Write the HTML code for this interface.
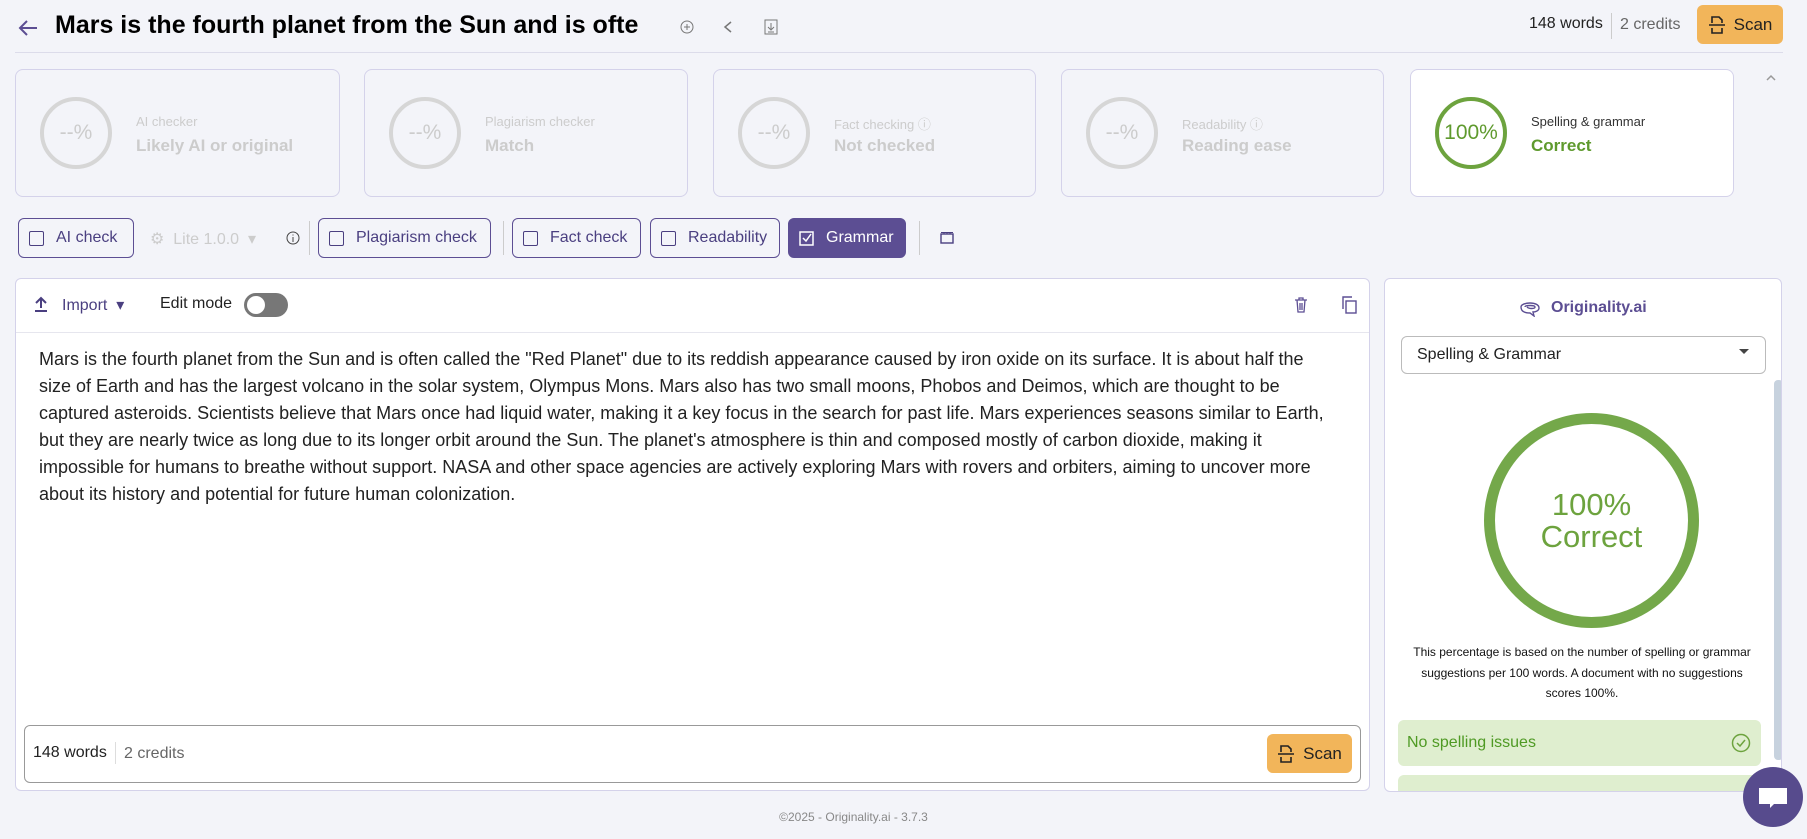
<!DOCTYPE html>
<html><head><meta charset="utf-8"><style>
*{box-sizing:border-box;margin:0;padding:0}
body{width:1807px;height:839px;background:#f3f4f9;font-family:"Liberation Sans",Arial,sans-serif;position:relative;overflow:hidden;color:#222}
.abs{position:absolute}
.card{position:absolute;top:69px;height:128px;border:1px solid #d4d2ea;border-radius:8px;background:#f3f4f9}
.card .ring{position:absolute;left:24px;top:27px;width:72px;height:72px;border:4px solid #d6d6d6;border-radius:50%;display:flex;align-items:center;justify-content:center;color:#ccc;font-size:21px}
.card .t1{position:absolute;left:120px;top:44px;font-size:13px;color:#ccc}
.card .t2{position:absolute;left:120px;top:66px;font-size:17px;font-weight:bold;color:#ccc}
.btn{position:absolute;top:218px;height:40px;border:1px solid #5c4e93;border-radius:6px;display:flex;align-items:center;padding-left:10px;font-size:16px;color:#4a3f80}
.cb{width:15px;height:15px;border:1.5px solid #4a3f80;border-radius:2px;margin-right:12px}
.vd{position:absolute;width:1px;background:#ccc}
</style></head><body>
<svg class="abs" style="left:17px;top:18px" width="22" height="20" viewBox="0 0 22 20"><path d="M20 10H3M10 3L3 10l7 7" stroke="#5c4e93" stroke-width="2" fill="none"/></svg>
<div class="abs" style="left:55px;top:11px;font-size:25px;font-weight:bold;color:#000">Mars is the fourth planet from the Sun and is ofte</div>
<svg class="abs" style="left:680px;top:20px" width="14" height="14"><circle cx="7" cy="7" r="6" stroke="#777" fill="none"/><path d="M7 4v6M4 7h6" stroke="#777"/></svg>
<svg class="abs" style="left:721px;top:20px" width="14" height="14"><path d="M10 2L4 7l6 5" stroke="#777" stroke-width="1.5" fill="none"/></svg>
<svg class="abs" style="left:764px;top:19px" width="14" height="16"><rect x="1" y="1" width="12" height="14" stroke="#777" fill="none"/><path d="M7 4v6M4 8l3 3 3-3M4 13h6" stroke="#777" fill="none"/></svg>
<div class="abs" style="left:1529px;top:15px;font-size:16px;color:#222">148 words</div>
<div class="vd" style="left:1611px;top:13px;height:26px"></div>
<div class="abs" style="left:1620px;top:16px;font-size:16px;color:#666">2 credits</div>
<div class="abs" style="left:1697px;top:5px;width:86px;height:39px;background:#f2b55a;border-radius:6px;display:flex;align-items:center;justify-content:center;font-size:17px;color:#222">
<svg width="18" height="20" style="margin-right:8px"><path d="M4 8V2h7l3 3v3M1 10h16M4 13v5h10v-5" stroke="#222" stroke-width="1.6" fill="none"/></svg>Scan</div>
<div class="abs" style="left:15px;top:52px;width:1768px;height:1px;background:#dcdcea"></div>
<div class="card" style="left:15px;width:325px"><div class="ring">--%</div><div class="t1">AI checker</div><div class="t2">Likely AI or original</div></div>
<div class="card" style="left:364px;width:324px"><div class="ring">--%</div><div class="t1">Plagiarism checker</div><div class="t2">Match</div></div>
<div class="card" style="left:713px;width:323px"><div class="ring">--%</div><div class="t1">Fact checking ⓘ</div><div class="t2">Not checked</div></div>
<div class="card" style="left:1061px;width:323px"><div class="ring">--%</div><div class="t1">Readability ⓘ</div><div class="t2">Reading ease</div></div>
<div class="card" style="left:1410px;width:324px;background:#fff"><div class="ring" style="border-color:#6da33e;color:#5f9a2e;font-size:21px">100%</div><div class="t1" style="color:#333">Spelling &amp; grammar</div><div class="t2" style="color:#5f9a2e">Correct</div></div>
<svg class="abs" style="left:1765px;top:73px" width="12" height="10"><path d="M2 7l4-4 4 4" stroke="#999" stroke-width="1.5" fill="none"/></svg>
<div class="btn" style="left:18px;width:116px"><div class="cb"></div>AI check</div>
<div class="abs" style="left:150px;top:229px;font-size:16px;color:#ccc">⚙&nbsp;&nbsp;Lite 1.0.0 &nbsp;▾</div>
<svg class="abs" style="left:286px;top:231px" width="14" height="14"><circle cx="7" cy="7" r="6" stroke="#444" fill="none"/><path d="M7 6v5M7 3.5v1" stroke="#444"/></svg>
<div class="vd" style="left:309px;top:221px;height:34px"></div>
<div class="btn" style="left:318px;width:173px"><div class="cb"></div>Plagiarism check</div>
<div class="vd" style="left:503px;top:221px;height:34px"></div>
<div class="btn" style="left:512px;width:129px"><div class="cb"></div>Fact check</div>
<div class="btn" style="left:650px;width:130px"><div class="cb"></div>Readability</div>
<div class="btn" style="left:788px;width:118px;background:#5c4e93;color:#fff"><svg width="15" height="15" style="margin-right:12px"><rect x="1" y="1" width="13" height="13" stroke="#fff" fill="none" stroke-width="1.5"/><path d="M4 7l3 3 5-7" stroke="#fff" stroke-width="1.5" fill="none"/></svg>Grammar</div>
<div class="vd" style="left:919px;top:221px;height:34px"></div>
<svg class="abs" style="left:940px;top:231px" width="14" height="13"><rect x="1" y="3" width="12" height="9" stroke="#4a3f80" fill="none" stroke-width="1.4"/><path d="M1 1.5h12M4 1v2M7 1v2M10 1v2" stroke="#4a3f80"/></svg>
<div class="abs" style="left:15px;top:278px;width:1355px;height:513px;background:#fff;border:1px solid #d4d2ea;border-radius:6px"></div>
<svg class="abs" style="left:34px;top:296px" width="14" height="16"><path d="M7 12V2M2 7l5-5 5 5M1 15h12" stroke="#4a3f80" stroke-width="2" fill="none"/></svg>
<div class="abs" style="left:62px;top:295px;font-size:16px;color:#4a3f80">Import &nbsp;▾</div>
<div class="abs" style="left:160px;top:295px;font-size:16px;color:#222">Edit mode</div>
<div class="abs" style="left:244px;top:293px;width:44px;height:24px;border-radius:12px;background:#777"><div style="position:absolute;left:3px;top:3px;width:18px;height:18px;border-radius:50%;background:#fff"></div></div>
<svg class="abs" style="left:1294px;top:297px" width="14" height="16"><path d="M1 3h12M5 3V1h4v2M3 3l1 12h6l1-12M6 6v7M8 6v7" stroke="#5c4e93" stroke-width="1.3" fill="none"/></svg>
<svg class="abs" style="left:1341px;top:296px" width="16" height="18"><rect x="5" y="5" width="10" height="12" stroke="#5c4e93" fill="none" stroke-width="1.4"/><path d="M2 13V1h9" stroke="#5c4e93" fill="none" stroke-width="1.4"/></svg>
<div class="abs" style="left:16px;top:332px;width:1353px;height:1px;background:#e6e6ee"></div>
<div class="abs" style="left:39px;top:346px;width:1300px;font-size:18px;line-height:27px;color:#222">Mars is the fourth planet from the Sun and is often called the "Red Planet" due to its reddish appearance caused by iron oxide on its surface. It is about half the size of Earth and has the largest volcano in the solar system, Olympus Mons. Mars also has two small moons, Phobos and Deimos, which are thought to be captured asteroids. Scientists believe that Mars once had liquid water, making it a key focus in the search for past life. Mars experiences seasons similar to Earth, but they are nearly twice as long due to its longer orbit around the Sun. The planet's atmosphere is thin and composed mostly of carbon dioxide, making it impossible for humans to breathe without support. NASA and other space agencies are actively exploring Mars with rovers and orbiters, aiming to uncover more about its history and potential for future human colonization.</div>
<div class="abs" style="left:24px;top:725px;width:1337px;height:58px;border:1px solid #999;border-radius:6px;background:#fff"></div>
<div class="abs" style="left:33px;top:744px;font-size:16px;color:#222">148 words</div>
<div class="vd" style="left:115px;top:742px;height:22px;background:#ddd"></div>
<div class="abs" style="left:124px;top:745px;font-size:16px;color:#666">2 credits</div>
<div class="abs" style="left:1267px;top:734px;width:85px;height:39px;background:#f2b55a;border-radius:6px;display:flex;align-items:center;justify-content:center;font-size:17px;color:#222">
<svg width="18" height="20" style="margin-right:8px"><path d="M4 8V2h7l3 3v3M1 10h16M4 13v5h10v-5" stroke="#222" stroke-width="1.6" fill="none"/></svg>Scan</div>
<div class="abs" style="left:1384px;top:278px;width:398px;height:514px;background:#fff;border:1px solid #d4d2ea;border-radius:6px;overflow:hidden">
<div class="abs" style="left:133px;top:20px;font-size:16px;font-weight:bold;color:#5c4e93;display:flex;align-items:center"><svg width="24" height="18" style="margin-right:9px"><path d="M3 8c0-5 18-6 18 1 0 3-4 4-6 4l1 4-4-3C6 14 3 12 3 8zM7 8c0-2 10-2 10 0s-6 2-8 0" stroke="#5c4e93" stroke-width="1.4" fill="none"/></svg>Originality.ai</div>
<div class="abs" style="left:16px;top:57px;width:365px;height:38px;border:1px solid #bbb;border-radius:6px;font-size:16px;color:#222;padding:9px 0 0 15px">Spelling &amp; Grammar<span style="position:absolute;right:16px;top:12px;width:0;height:0;border-left:5px solid transparent;border-right:5px solid transparent;border-top:5px solid #444"></span></div>
<div class="abs" style="left:389px;top:101px;width:9px;height:380px;background:#c7d2de;border-radius:4px"></div>
<div class="abs" style="left:99px;top:134px;width:215px;height:215px;border:11px solid #74a84a;border-radius:50%;display:flex;flex-direction:column;align-items:center;justify-content:center;color:#6da33e;font-size:31px;line-height:32px;text-align:center">100%<br>Correct</div>
<div class="abs" style="left:22px;top:363px;width:350px;font-size:12px;line-height:20.5px;text-align:center;color:#111">This percentage is based on the number of spelling or grammar suggestions per 100 words. A document with no suggestions scores 100%.</div>
<div class="abs" style="left:13px;top:441px;width:363px;height:46px;background:#dfeecf;border-radius:6px;font-size:16px;color:#4f9a24;padding:14px 0 0 9px">No spelling issues<svg width="20" height="20" style="position:absolute;right:10px;top:13px"><circle cx="10" cy="10" r="8.5" stroke="#6da33e" stroke-width="1.5" fill="none"/><path d="M6 10l3 3 5-6" stroke="#6da33e" stroke-width="1.5" fill="none"/></svg></div>
<div class="abs" style="left:13px;top:496px;width:363px;height:46px;background:#dfeecf;border-radius:6px"></div>
</div>
<div class="abs" style="left:1743px;top:767px;width:60px;height:60px;border-radius:50%;background:#574b8d"><svg width="30" height="24" style="position:absolute;left:15px;top:19px"><path d="M1 2h28v16H16l-4 4v-4H1z" fill="#fff"/></svg></div>
<div class="abs" style="left:0;top:810px;width:1707px;text-align:center;font-size:12px;color:#888">©2025 - Originality.ai - 3.7.3</div>
</body></html>
